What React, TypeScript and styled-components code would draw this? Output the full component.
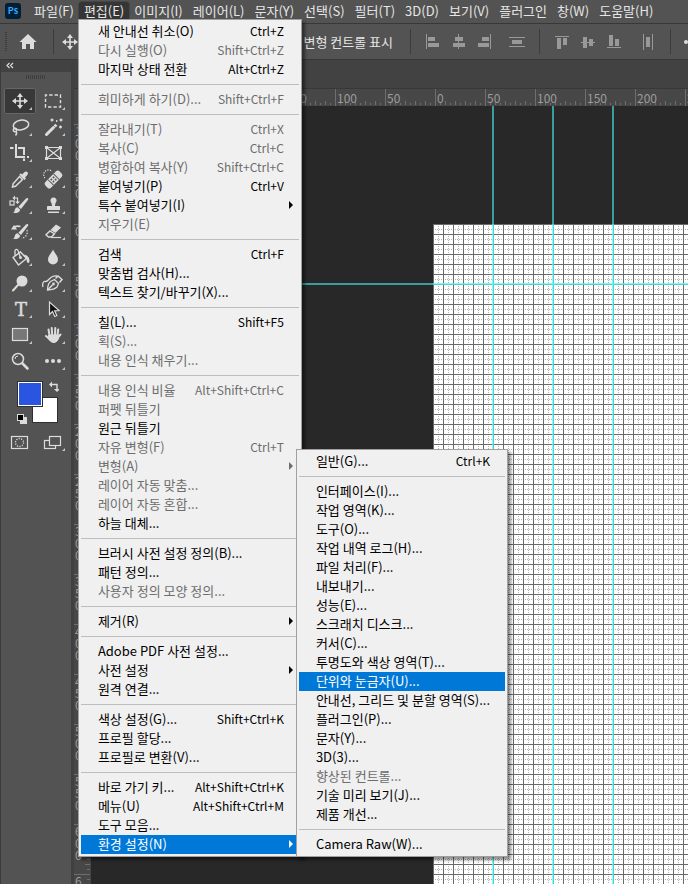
import React, { useEffect, useState } from "react";
import styled, { createGlobalStyle, css } from "styled-components";

const UI_FONT = `"Noto Sans CJK KR", "Noto Sans", sans-serif`;

const GlobalStyle = createGlobalStyle`
  *, *::before, *::after { box-sizing: border-box; }
  html, body { margin: 0; padding: 0; }
  body { font-family: ${UI_FONT}; font-size: 13px; background: #535353; overflow: hidden; }
  button { font: inherit; border: 0; padding: 0; background: none; color: inherit; }
`;

/* ---------- application frame ---------- */

const Frame = styled.div`
  display: flex;
  flex-direction: column;
  height: 100vh;
  background: #535353;
  color: #e6e6e6;
`;

const MenuBar = styled.nav`
  display: flex;
  align-items: stretch;
  height: 24px;
  flex: none;
  padding: 2px 0 1px 5px;
  border-bottom: 1px solid #383838;
`;

const Logo = styled.svg`
  display: block;
  flex: none;
  width: 16px;
  height: 16px;
  margin: 1px 8px 0 0;
`;

const MenuSlot = styled.div`
  position: relative;
  display: flex;
`;

const MenuTitle = styled.button<{ $open?: boolean }>`
  padding: 0 5px 3px;
  line-height: 16px;
  white-space: nowrap;
  border-radius: 3px 3px 0 0;
  background: ${(p) => (p.$open ? "#353535" : "transparent")};
  box-shadow: ${(p) => (p.$open ? "0 0 0 1px #464646" : "none")};
`;

const OptionsBar = styled.div`
  display: flex;
  align-items: center;
  height: 36px;
  flex: none;
  border-bottom: 1px solid #383838;
  overflow: hidden;
`;

const Grip = styled.div`
  flex: none;
  width: 2px;
  height: 20px;
  margin-left: 5px;
  background: repeating-linear-gradient(#3c3c3c 0 1px, transparent 1px 2px);
`;

const Divider = styled.div<{ $gap: number }>`
  flex: none;
  width: 1px;
  height: 25px;
  margin: 0 ${(p) => p.$gap}px;
  background: #3c3c3c;
`;

const OptionButton = styled.button<{ $left?: number }>`
  display: block;
  flex: none;
  margin-left: ${(p) => p.$left ?? 0}px;
  line-height: 0;
`;

const OptionChecks = styled.div`
  display: flex;
  justify-content: flex-end;
  flex: none;
  width: 318px;
  padding-right: 5px;
`;

const CheckLabel = styled.label`
  display: flex;
  align-items: center;
  gap: 6px;
  white-space: nowrap;
  input { width: 12px; height: 12px; margin: 0; }
`;

/* ---------- work area ---------- */

const Workspace = styled.div`
  display: flex;
  flex: 1;
  min-height: 0;
`;

const ToolPanel = styled.aside`
  display: flex;
  flex-direction: column;
  flex: none;
  width: 74px;
  background: #535353;
  border-left: 1px solid #3c3c3c;
  border-right: 3px solid #404040;
`;

const PanelHeader = styled.div`
  height: 12px;
  padding-left: 5px;
  background: #424242;
  line-height: 0;
`;

const PanelGrip = styled.div`
  width: 20px;
  height: 4px;
  margin: 3px 0 9px 25px;
  background: repeating-linear-gradient(90deg, #3e3e3e 0 1px, transparent 1px 2px);
`;

const ToolGrid = styled.div`
  display: grid;
  grid-template-columns: 32px 32px;
  grid-auto-rows: 26px;
  column-gap: 1px;
  margin-left: 3px;
`;

const ToolButton = styled.button<{ $active?: boolean; $more?: boolean }>`
  position: relative;
  display: flex;
  align-items: center;
  justify-content: center;
  border-radius: 2px;
  ${(p) => p.$active && css`background: #383838; box-shadow: inset 0 0 0 1px #666;`}
  svg { display: block; overflow: visible; }
  ${(p) =>
    p.$more &&
    css`
      &::after {
        content: "";
        position: absolute;
        left: 25px;
        top: 19px;
        border-left: 3px solid transparent;
        border-bottom: 3px solid #c4c4c4;
      }
    `}
`;

const SwatchRow = styled.div`
  margin: 5px 0 0 14px;
  line-height: 0;
`;

const DocumentArea = styled.main`
  display: flex;
  flex-direction: column;
  flex: 1;
  min-width: 0;
`;

const TabStrip = styled.div`
  flex: none;
  height: 29px;
  background: #424242;
  border-bottom: 1px solid #383838;
`;

const TopRuler = styled.div`
  flex: none;
  height: 17px;
  padding-left: 17px;
  overflow: hidden;
  background: #474747;
  svg { display: block; }
`;

const DocumentRow = styled.div`
  display: flex;
  flex: 1;
  min-height: 0;
`;

const SideRuler = styled.div`
  flex: none;
  width: 17px;
  overflow: hidden;
  background: #474747;
  svg { display: block; }
`;

const Canvas = styled.div`
  flex: 1;
  min-width: 0;
  overflow: hidden;
  background: #282828;
  svg { display: block; }
`;

/* ---------- popup menus ---------- */

const popup = css`
  position: absolute;
  z-index: 2;
  margin: 0;
  padding: 2px;
  list-style: none;
  color: #000;
  background: #f0f0f0;
  border: 1px solid #a0a0a0;
  box-shadow: 3px 3px 3px rgba(0, 0, 0, 0.45);
`;

const EditPopup = styled.ul`
  ${popup}
  top: 17px;
  left: -1px;
  min-width: 224px;
`;

const SubPopup = styled.ul`
  ${popup}
  left: calc(100% - 3px);
  bottom: -3px;
  min-width: 212px;
`;

const Row = styled.li`
  position: relative;
`;

const RowButton = styled.button<{ $selected?: boolean; $arrow?: boolean }>`
  position: relative;
  display: flex;
  align-items: center;
  justify-content: space-between;
  gap: 12px;
  width: 100%;
  height: 19px;
  padding: 0 15px 2px 17px;
  line-height: 17px;
  white-space: nowrap;
  color: ${(p) => (p.$selected ? "#fff" : "#000")};
  background: ${(p) => (p.$selected ? "#0078d7" : "transparent")};
  &:disabled { color: #6d6d6d; }
  ${(p) =>
    p.$arrow &&
    css`
      &::after {
        content: "";
        position: absolute;
        right: 6px;
        top: 5px;
        border: 4px solid transparent;
        border-left-color: currentColor;
        border-right-width: 0;
      }
    `}
`;

const Shortcut = styled.span`
  font-size: 12px;
`;

const Rule = styled.li`
  height: 11px;
  padding-top: 5px;
  &::before {
    content: "";
    display: block;
    height: 1px;
    background: #bdbdbd;
  }
`;

type Item = {
  label: string;
  keys?: string;
  off?: boolean;
  arrow?: boolean;
  selected?: boolean;
  children?: Group[];
};
type Group = Item[];

const preferenceGroups: Group[] = [
  [{ label: "일반(G)...", keys: "Ctrl+K" }],
  [
    { label: "인터페이스(I)..." },
    { label: "작업 영역(K)..." },
    { label: "도구(O)..." },
    { label: "작업 내역 로그(H)..." },
    { label: "파일 처리(F)..." },
    { label: "내보내기..." },
    { label: "성능(E)..." },
    { label: "스크래치 디스크..." },
    { label: "커서(C)..." },
    { label: "투명도와 색상 영역(T)..." },
    { label: "단위와 눈금자(U)...", selected: true },
    { label: "안내선, 그리드 및 분할 영역(S)..." },
    { label: "플러그인(P)..." },
    { label: "문자(Y)..." },
    { label: "3D(3)..." },
    { label: "향상된 컨트롤...", off: true },
    { label: "기술 미리 보기(J)..." },
    { label: "제품 개선..." },
  ],
  [{ label: "Camera Raw(W)..." }],
];

const editGroups: Group[] = [
  [
    { label: "새 안내선 취소(O)", keys: "Ctrl+Z" },
    { label: "다시 실행(O)", keys: "Shift+Ctrl+Z", off: true },
    { label: "마지막 상태 전환", keys: "Alt+Ctrl+Z" },
  ],
  [{ label: "희미하게 하기(D)...", keys: "Shift+Ctrl+F", off: true }],
  [
    { label: "잘라내기(T)", keys: "Ctrl+X", off: true },
    { label: "복사(C)", keys: "Ctrl+C", off: true },
    { label: "병합하여 복사(Y)", keys: "Shift+Ctrl+C", off: true },
    { label: "붙여넣기(P)", keys: "Ctrl+V" },
    { label: "특수 붙여넣기(I)", arrow: true },
    { label: "지우기(E)", off: true },
  ],
  [
    { label: "검색", keys: "Ctrl+F" },
    { label: "맞춤법 검사(H)..." },
    { label: "텍스트 찾기/바꾸기(X)..." },
  ],
  [
    { label: "칠(L)...", keys: "Shift+F5" },
    { label: "획(S)...", off: true },
    { label: "내용 인식 채우기...", off: true },
  ],
  [
    { label: "내용 인식 비율", keys: "Alt+Shift+Ctrl+C", off: true },
    { label: "퍼펫 뒤틀기", off: true },
    { label: "원근 뒤틀기" },
    { label: "자유 변형(F)", keys: "Ctrl+T", off: true },
    { label: "변형(A)", arrow: true, off: true },
    { label: "레이어 자동 맞춤...", off: true },
    { label: "레이어 자동 혼합...", off: true },
    { label: "하늘 대체..." },
  ],
  [
    { label: "브러시 사전 설정 정의(B)..." },
    { label: "패턴 정의..." },
    { label: "사용자 정의 모양 정의...", off: true },
  ],
  [{ label: "제거(R)", arrow: true }],
  [
    { label: "Adobe PDF 사전 설정..." },
    { label: "사전 설정", arrow: true },
    { label: "원격 연결..." },
  ],
  [
    { label: "색상 설정(G)...", keys: "Shift+Ctrl+K" },
    { label: "프로필 할당..." },
    { label: "프로필로 변환(V)..." },
  ],
  [
    { label: "바로 가기 키...", keys: "Alt+Shift+Ctrl+K" },
    { label: "메뉴(U)", keys: "Alt+Shift+Ctrl+M" },
    { label: "도구 모음..." },
    { label: "환경 설정(N)", arrow: true, selected: true, children: preferenceGroups },
  ],
];

function MenuRows({ groups }: { groups: Group[] }) {
  return (
    <>
      {groups.map((group, g) => (
        <React.Fragment key={g}>
          {g > 0 && <Rule role="separator" />}
          {group.map((item) => (
            <Row key={item.label}>
              <RowButton disabled={item.off} $arrow={item.arrow} $selected={item.selected}>
                <span>{item.label}</span>
                {item.keys && <Shortcut>{item.keys}</Shortcut>}
              </RowButton>
              {item.children && (
                <SubPopup>
                  <MenuRows groups={item.children} />
                </SubPopup>
              )}
            </Row>
          ))}
        </React.Fragment>
      ))}
    </>
  );
}

/* ---------- tool icons, drawn on a 20 × 20 field ---------- */

const C = "#dcdcdc";
const BG = "#535353";

const moveShape = (
  <>
    <path d="M10 4v12M4 10h12" stroke={C} strokeWidth="1.6" />
    <path d="M10 2l3 4H7zM10 18l3-4H7zM2 10l4-3v6zM18 10l-4-3v6z" fill={C} />
  </>
);

const brushShape = (
  <>
    <path d="M18 3.2c.5.5.2 1.200-.3 2L11 14l-2.600-2.300L16 3.600c.8-.8 1.500-.9 2-.4z" fill={C} />
    <path d="M7.600 12.300l2.600 2.400c-.5 2.700-3.200 3.700-7.200 3.300 1.800-.9 1.500-2.200 2-3.700.5-1.300 1.500-2 2.600-2z" fill={C} />
  </>
);

const tools: { name: string; more?: boolean; active?: boolean; art: React.ReactNode }[] = [
  { name: "이동", more: true, active: true, art: moveShape },
  {
    name: "사각형 선택",
    more: true,
    art: <rect x="2.500" y="4" width="15" height="12" fill="none" stroke={C} strokeWidth="1.400" strokeDasharray="3.400 2" strokeDashoffset="1.700" />,
  },
  {
    name: "올가미",
    more: true,
    art: (
      <g fill="none" stroke={C} strokeWidth="1.500">
        <ellipse cx="11" cy="8" rx="7.800" ry="4.800" transform="rotate(-10 11 8)" />
        <circle cx="5" cy="13" r="1.700" />
        <path d="M6 14.500c1 1.500 1 2.500-.5 4" />
      </g>
    ),
  },
  {
    name: "자동 선택",
    more: true,
    art: (
      <>
        <path d="M3.500 17.500L10.500 10.500" stroke={C} strokeWidth="3" strokeLinecap="round" />
        <path d="M10.600 8.500l2 2 1.800-1.800-2-2z" fill={C} />
        <path d="M9 1.500v3M7.500 3h3M18 1.500v3M16.500 3h3M17.500 8.500v3M16 10h3M13.700 3v2" stroke={C} strokeWidth="1.300" />
      </>
    ),
  },
  {
    name: "자르기",
    more: true,
    art: <path d="M6 1v13h9M0 5h3.500M17 14h2M8 5h6v7M14 15.500V18" fill="none" stroke={C} strokeWidth="2" />,
  },
  {
    name: "프레임",
    art: (
      <>
        <path d="M3.500 4.500h14v11h-14zM3.500 4.500l14 11M17.500 4.500l-14 11" fill="none" stroke={C} strokeWidth="1.200" />
        <path d="M2 3h3v3H2zM16 3h3v3h-3zM2 14h3v3H2zM16 14h3v3h-3z" fill={C} />
      </>
    ),
  },
  {
    name: "스포이드",
    more: true,
    art: (
      <>
        <path d="M9.500 7.500l3 3-7 6.800-3 .7.600-3.200z" fill="none" stroke={C} strokeWidth="1.500" />
        <path d="M12 5.500l2.300-2.300c1-1 2.300-1 3.100-.1.800.8.8 2.100-.1 3L15 8.500l1 1-1.500 1.500-5.200-5.200 1.500-1.500z" fill={C} />
      </>
    ),
  },
  {
    name: "스팟 복구 브러시",
    more: true,
    art: (
      <>
        <g transform="rotate(-45 10.500 10.500)">
          <rect x="0.500" y="6.500" width="20" height="8" rx="2.500" fill={C} />
          <path d="M6.500 6.500v8M14.500 6.500v8" stroke={BG} strokeWidth="1" />
          <g fill={BG}>
            <circle cx="9" cy="9" r="1" />
            <circle cx="12" cy="9" r="1" />
            <circle cx="9" cy="12" r="1" />
            <circle cx="12" cy="12" r="1" />
          </g>
        </g>
        <path d="M2 9A4.500 4.500 0 0 1 9 2.500" fill="none" stroke={C} strokeWidth="1.200" strokeDasharray="1.200 1.200" />
      </>
    ),
  },
  {
    name: "색상 대체",
    more: true,
    art: (
      <>
        {brushShape}
        <rect x="0" y="6" width="4" height="4" fill="none" stroke={C} strokeWidth="1.200" />
        <path d="M4 3h3.500v4" fill="none" stroke={C} strokeWidth="1.200" />
        <path d="M5 .5v5L2.500 3zM5 6.500h5L7.500 9z" fill={C} />
      </>
    ),
  },
  {
    name: "복제 도장",
    more: true,
    art: (
      <path
        d="M10.500 2.500a3 3 0 0 1 2.900 4c-.5 1.200-1.400 2-1.400 4.500h4c.6 0 1 .4 1 1v3H4v-3c0-.6.4-1 1-1h4c0-2.500-.9-3.300-1.400-4.500a3 3 0 0 1 2.900-4zM5 16.500h11V18H5z"
        fill={C}
      />
    ),
  },
  {
    name: "작업 내역 브러시",
    more: true,
    art: (
      <>
        {brushShape}
        <path d="M3 7c2-2 4.500-2.300 7.500-1.500" fill="none" stroke={C} strokeWidth="1.700" />
        <path d="M1 8.500L4 4l3 4.500z" fill={C} />
        <path d="M17 9c1 4-1 7.500-5.500 8.500" fill="none" stroke={C} strokeWidth="1.300" strokeDasharray="1.300 1.500" />
      </>
    ),
  },
  {
    name: "지우개",
    more: true,
    art: (
      <>
        <path d="M13 3.500l5 3-5.500 5.500-5-3z" fill={C} />
        <path d="M7 10l4.500 2.800-3 3.200H5.500L3 13.800z" fill="none" stroke={C} strokeWidth="1.400" />
        <path d="M8 16.500h10" stroke={C} strokeWidth="1.200" />
      </>
    ),
  },
  {
    name: "페인트 통",
    more: true,
    art: (
      <>
        <path d="M3 10.500L10.500 5l6 6.500-8 6.500z" fill="none" stroke={C} strokeWidth="1.400" />
        <path d="M10.500 10.500L8 3.500c-.6-1.600-3-1.500-3 .5v5" fill="none" stroke={C} strokeWidth="1.300" />
        <circle cx="10.500" cy="10.500" r="1.500" fill={C} />
        <path d="M13.500 7.500c4 .5 6 3 6 6.500 0 2.500-2.500 2.500-2.700.3-.1-2-1-4.300-3.300-6.800z" fill={C} />
      </>
    ),
  },
  {
    name: "흐림 효과",
    more: true,
    art: <path d="M10 2.500c1.500 3.500 5 6.500 5 10a5 5 0 0 1-10 0c0-3.500 3.500-6.500 5-10z" fill={C} />,
  },
  {
    name: "닷지",
    more: true,
    art: (
      <>
        <circle cx="12" cy="8" r="5.500" fill={C} />
        <path d="M8 12l-5 5.500" stroke={C} strokeWidth="2" strokeLinecap="round" />
      </>
    ),
  },
  {
    name: "곡률 펜",
    more: true,
    art: (
      <>
        <path d="M4.500 17c.2-4 1-7 3-8.500l4-2 4 4-1.500 3.500c-2 2-5.500 2.800-9.500 3z" fill="none" stroke={C} strokeWidth="1.300" />
        <path d="M4.500 17l5-5M12.500 5.500l2.500-2.500 4 3.500-2.500 3" fill="none" stroke={C} strokeWidth="1.500" />
        <circle cx="10.500" cy="11" r="1.400" fill={C} />
        <path d="M0 14c-1-3 0-6 2.500-5.500C6 9 6 2 14 3" fill="none" stroke={C} strokeWidth="1.300" />
      </>
    ),
  },
  {
    name: "수평 문자",
    more: true,
    art: (
      <text x="11" y="17" textAnchor="middle" fontFamily="DejaVu Serif, serif" fontSize="18" fill={C} stroke={C} strokeWidth="0.500">
        T
      </text>
    ),
  },
  {
    name: "패스 선택",
    more: true,
    art: <path d="M6.500 3v12.500l3-3 2.300 5 2-1-2.200-4.700 4.400-.3z" fill="#111" stroke={C} strokeWidth="1.200" />,
  },
  {
    name: "사각형",
    more: true,
    art: <rect x="2.500" y="3.500" width="15" height="12" fill="#777" stroke={C} strokeWidth="1.200" />,
  },
  {
    name: "손",
    more: true,
    art: (
      <g fill="none" stroke={C} strokeWidth="2" strokeLinecap="round">
        <path d="M6.500 10L5.500 4.500M9.200 10L8.700 3M12 10l.3-7M14.500 10l.7-5.500M7 14.500l-4-3.500M14.500 13l3-3.500" />
        <path d="M6 10h9.500c.5 4-1 7-4.500 7.500-3 0-4.500-2-5.500-4z" fill={C} strokeWidth="1" />
      </g>
    ),
  },
  {
    name: "돋보기",
    art: (
      <>
        <circle cx="8" cy="8" r="5.500" fill="none" stroke={C} strokeWidth="1.500" />
        <path d="M12.500 12.500l5 5" stroke={C} strokeWidth="2.600" strokeLinecap="round" />
        <path d="M5 8a3 3 0 0 1 3-3" fill="none" stroke={C} strokeWidth="1" />
      </>
    ),
  },
  {
    name: "더 보기",
    more: true,
    art: (
      <g fill={C}>
        <circle cx="4" cy="10" r="2" />
        <circle cx="10" cy="10" r="2" />
        <circle cx="16" cy="10" r="2" />
      </g>
    ),
  },
];

function ToolArt({ children }: { children: React.ReactNode }) {
  return (
    <svg width="20" height="20" viewBox="0 0 20 20" aria-hidden="true">
      {children}
    </svg>
  );
}

function Swatches() {
  return (
    <svg width="44" height="50" viewBox="0 0 44 50" role="img" aria-label="전경색과 배경색">
      <rect x="17.500" y="18.500" width="25" height="25" fill="#fff" stroke="#2e2e2e" />
      <rect x="2.500" y="2.500" width="25" height="25" fill="#fff" stroke="#2e2e2e" />
      <rect x="4" y="4" width="22" height="22" fill="#2a55e0" />
      <path d="M36 5.500h6v6" fill="none" stroke={C} strokeWidth="1.400" />
      <path d="M37 2.500v6l-3-3zM39 10h6l-3 3z" fill={C} />
      <rect x="5" y="38" width="7" height="7" fill={C} />
      <rect x="2.500" y="35.500" width="6" height="6" fill="#000" stroke={C} />
    </svg>
  );
}

/* ---------- option bar alignment icons, 20 × 16 ---------- */

const alignIcons: { name: string; d: string; gap: number }[] = [
  { name: "왼쪽 정렬", d: "M3 0h1v15H3zM5 3h7v4H5zM5 9h11v4H5z", gap: 0 },
  { name: "수평 중앙 정렬", d: "M9 0h1v15H9zM6 3h8v4H6zM4 9h12v4H4z", gap: 6 },
  { name: "오른쪽 정렬", d: "M15 0h1v15h-1zM7 3h7v4H7zM3 9h11v4H3z", gap: 6 },
  { name: "수직 분포", d: "M2 3h16v1H2zM5 6h10v4H5zM2 12h16v1H2z", gap: 12 },
];

const alignIconsVertical: { name: string; d: string; gap: number }[] = [
  { name: "위쪽 정렬", d: "M3 2h14v1H3zM5 4h4v11H5zM11 4h4v7h-4z", gap: 0 },
  { name: "수직 중앙 정렬", d: "M3 8h14v1H3zM5 3h4v11H5zM11 5h4v7h-4z", gap: 6 },
  { name: "아래쪽 정렬", d: "M3 13h14v1H3zM5 1h4v11H5zM11 5h4v7h-4z", gap: 6 },
  { name: "수평 분포", d: "M5 0h1v16H5zM8 3h4v10H8zM14 0h1v16h-1z", gap: 14 },
];

function AlignGroup({ icons }: { icons: typeof alignIcons }) {
  return (
    <>
      {icons.map((icon) => (
        <OptionButton key={icon.name} $left={icon.gap} aria-label={icon.name}>
          <svg width="20" height="16" viewBox="0 0 20 16">
            <path d={icon.d} fill="#999" />
          </svg>
        </OptionButton>
      ))}
    </>
  );
}

/* ---------- rulers and canvas ---------- */

const RULER = "#9c9c9c";
const TICK = "#6e6e6e";

/* Labelled ruler steps (50 units each) that fit in a ruler of the given length. */
function rulerSteps(length: number, zero: number) {
  const first = Math.ceil(-zero / 50);
  const last = Math.floor((length - zero) / 50);
  return Array.from({ length: Math.max(0, last - first + 1) }, (_, i) => first + i);
}

function useWindowSize() {
  const [size, setSize] = useState({ width: window.innerWidth, height: window.innerHeight });
  useEffect(() => {
    const update = () => setSize({ width: window.innerWidth, height: window.innerHeight });
    window.addEventListener("resize", update);
    return () => window.removeEventListener("resize", update);
  }, []);
  return size;
}

function HorizontalRuler({ length }: { length: number }) {
  return (
    <svg width="100%" height="17">
      <defs>
        <pattern id="ticks-h" width="10" height="17" x="4" patternUnits="userSpaceOnUse">
          <path d="M0 12h1v4H0zM5 14h1v2H5z" fill={TICK} />
        </pattern>
      </defs>
      <rect width="100%" height="17" fill="url(#ticks-h)" />
      {rulerSteps(length, 344).map((m) => (
        <g key={m} fontSize="12" fill={RULER}>
          <rect x={344 + m * 50} y="0" width="1" height="17" fill={TICK} />
          <text x={346 + m * 50} y="14">{Math.abs(m * 50)}</text>
        </g>
      ))}
    </svg>
  );
}

function VerticalRuler({ length }: { length: number }) {
  return (
    <svg width="17" height="100%">
      <defs>
        <pattern id="ticks-v" width="17" height="10" y="8" patternUnits="userSpaceOnUse">
          <path d="M11 0h5v1h-5zM13 5h3v1h-3z" fill={TICK} />
        </pattern>
      </defs>
      <rect width="17" height="100%" fill="url(#ticks-v)" />
      {rulerSteps(length, 118).map((m) => (
        <g key={m} fontSize="12" fill={RULER}>
          <rect x="0" y={118 + m * 50} width="16" height="1" fill={TICK} />
          {String(Math.abs(m * 50)).split("").map((digit, i) => (
            <text key={i} x="1" y={130 + m * 50 + i * 12}>{digit}</text>
          ))}
        </g>
      ))}
    </svg>
  );
}

function GridDocument() {
  return (
    <svg width="100%" height="100%" aria-label="눈금 문서" role="img">
      <defs>
        <pattern id="grid" x="342" y="118" width="10" height="10" patternUnits="userSpaceOnUse">
          <rect width="10" height="10" fill="#fff" />
          <path d="M0 0h10v1H1v9H0z" fill="#6a6a6a" />
          <path
            d="M5 2h1v1H5zM5 4h1v1H5zM5 6h1v1H5zM5 8h1v1H5zM2 5h1v1H2zM4 5h1v1H4zM6 5h1v1H6zM8 5h1v1H8z"
            fill="#b4b4b4"
          />
        </pattern>
      </defs>
      <rect x="342" y="118" width="100%" height="100%" fill="url(#grid)" />
      <g fill="#4affff" fillOpacity="0.550">
        <rect x="401" y="0" width="2" height="100%" />
        <rect x="461" y="0" width="2" height="100%" />
        <rect x="521" y="0" width="2" height="100%" />
        <rect x="0" y="177" width="100%" height="2" />
      </g>
      <g fill="#4af4f0" fillOpacity="0.300">
        <rect x="401" y="118" width="2" height="100%" />
        <rect x="461" y="118" width="2" height="100%" />
        <rect x="521" y="118" width="2" height="100%" />
        <rect x="342" y="177" width="100%" height="2" />
      </g>
    </svg>
  );
}

const laterMenus = ["이미지(I)", "레이어(L)", "문자(Y)", "선택(S)", "필터(T)", "3D(D)", "보기(V)", "플러그인", "창(W)", "도움말(H)"];

export default function App() {
  const { width, height } = useWindowSize();
  return (
    <>
      <GlobalStyle />
      <Frame>
        <MenuBar>
          <Logo viewBox="0 0 16 16" role="img" aria-label="Photoshop">
            <rect width="16" height="16" rx="3" fill="#001e36" />
            <text x="8" y="11" textAnchor="middle" fontSize="9" fontWeight="700" fill="#31a8ff">Ps</text>
          </Logo>
          <MenuSlot>
            <MenuTitle>파일(F)</MenuTitle>
          </MenuSlot>
          <MenuSlot>
            <MenuTitle $open aria-expanded="true">편집(E)</MenuTitle>
            <EditPopup>
              <MenuRows groups={editGroups} />
            </EditPopup>
          </MenuSlot>
          {laterMenus.map((title) => (
            <MenuSlot key={title}>
              <MenuTitle>{title}</MenuTitle>
            </MenuSlot>
          ))}
        </MenuBar>

        <OptionsBar>
          <Grip />
          <OptionButton $left={11} aria-label="홈">
            <svg width="20" height="18" viewBox="0 0 20 18">
              <path d="M10 1l8.500 8H16v7h-4v-5H8v5H4V9H1.500z" fill={C} />
            </svg>
          </OptionButton>
          <Divider $gap={15} />
          <OptionButton $left={-9} aria-label="이동 도구">
            <ToolArt>{moveShape}</ToolArt>
          </OptionButton>
          <OptionChecks>
            <CheckLabel>
              <input type="checkbox" />
              변형 컨트롤 표시
            </CheckLabel>
          </OptionChecks>
          <Divider $gap={12} />
          <AlignGroup icons={alignIcons} />
          <Divider $gap={12} />
          <AlignGroup icons={alignIconsVertical} />
          <Divider $gap={12} />
          <OptionButton aria-label="추가 옵션">
            <svg width="20" height="16" viewBox="0 0 20 16">
              <g fill={C}>
                <circle cx="3" cy="8" r="2" />
                <circle cx="10" cy="8" r="2" />
                <circle cx="17" cy="8" r="2" />
              </g>
            </svg>
          </OptionButton>
        </OptionsBar>

        <Workspace>
          <ToolPanel>
            <PanelHeader>
              <svg width="8" height="12" viewBox="0 0 8 12" aria-hidden="true">
                <path d="M3.500 3L1 5.500 3.500 8M7 3L4.500 5.500 7 8" fill="none" stroke={C} strokeWidth="1.200" />
              </svg>
            </PanelHeader>
            <PanelGrip />
            <ToolGrid>
              {tools.map((tool) => (
                <ToolButton key={tool.name} $active={tool.active} $more={tool.more} aria-label={tool.name}>
                  <ToolArt>{tool.art}</ToolArt>
                </ToolButton>
              ))}
            </ToolGrid>
            <SwatchRow>
              <Swatches />
            </SwatchRow>
            <ToolGrid>
              <ToolButton aria-label="빠른 마스크">
                <ToolArt>
                  <rect x="1.500" y="4.500" width="16" height="12" fill="none" stroke={C} strokeWidth="1.200" />
                  <circle cx="9.500" cy="10.500" r="4" fill="none" stroke={C} strokeWidth="1.300" strokeDasharray="1.200 1.300" />
                </ToolArt>
              </ToolButton>
              <ToolButton $more aria-label="화면 모드">
                <ToolArt>
                  <rect x="1.500" y="8.500" width="11" height="8" fill={BG} stroke={C} strokeWidth="1.200" />
                  <rect x="6.500" y="4.500" width="11" height="9" fill={BG} stroke={C} strokeWidth="1.200" />
                </ToolArt>
              </ToolButton>
            </ToolGrid>
          </ToolPanel>

          <DocumentArea>
            <TabStrip />
            <TopRuler>
              <HorizontalRuler length={width - 91} />
            </TopRuler>
            <DocumentRow>
              <SideRuler>
                <VerticalRuler length={height - 106} />
              </SideRuler>
              <Canvas>
                <GridDocument />
              </Canvas>
            </DocumentRow>
          </DocumentArea>
        </Workspace>
      </Frame>
    </>
  );
}
